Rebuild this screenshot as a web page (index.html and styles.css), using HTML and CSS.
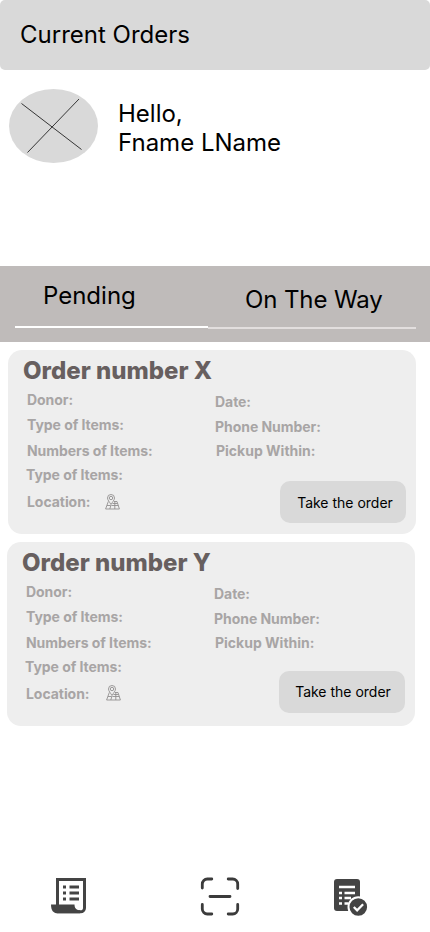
FILE: index.html
```html
<!DOCTYPE html>
<html lang="en">
<head>
<meta charset="utf-8">
<title>Current Orders</title>
<link rel="stylesheet" href="styles.css">
</head>
<body>
<svg class="defs" width="0" height="0">
  <symbol id="map-pin" viewBox="0 0 16 16">
    <g fill="none" stroke="currentColor" stroke-width="0.900">
      <path d="M6 10.500C4.500 8 2.500 6 2.500 4a3.500 3.500 0 0 1 7 0C9.500 6 7.500 8 6 10.500Z"/>
      <circle cx="6" cy="4" r="1.700"/>
      <path d="M3.300 7.500.6 15h13.800L12 7.500H9M2 11.500h3.500M6.500 11.500h6.800M4.800 15l1.200-4M9.800 15V7.500M7.500 9.500h5"/>
    </g>
  </symbol>
</svg>
<div class="app">
  <header class="topbar"><h1>Current Orders</h1></header>
  <section class="profile">
    <svg class="avatar" viewBox="0 0 89 74">
      <ellipse cx="44.500" cy="37" rx="44.500" ry="37" fill="#d9d9d9"/>
      <path d="M12.500 14.500 72.500 60.500M70 10 18.500 63.500" stroke="#222" stroke-width="0.900"/>
    </svg>
    <p class="greeting">Hello,<br>Fname LName</p>
  </section>
  <nav class="tabs">
    <a class="tab tab-active">Pending</a>
    <a class="tab tab-idle">On The Way</a>
  </nav>
  <main class="orders">
    <article class="order">
      <h2>Order number X</h2>
      <div class="details">
        <ul class="left">
          <li>Donor:</li><li>Type of Items:</li><li>Numbers of Items:</li><li>Type of Items:</li>
          <li>Location:<svg class="pin"><use href="#map-pin"/></svg></li>
        </ul>
        <div class="right">
          <ul><li>Date:</li><li>Phone Number:</li><li>Pickup Within:</li></ul>
          <button>Take the order</button>
        </div>
      </div>
    </article>
    <article class="order order-second">
      <h2>Order number Y</h2>
      <div class="details">
        <ul class="left">
          <li>Donor:</li><li>Type of Items:</li><li>Numbers of Items:</li><li>Type of Items:</li>
          <li>Location:<svg class="pin"><use href="#map-pin"/></svg></li>
        </ul>
        <div class="right">
          <ul><li>Date:</li><li>Phone Number:</li><li>Pickup Within:</li></ul>
          <button>Take the order</button>
        </div>
      </div>
    </article>
  </main>
  <footer class="bottombar">
    <svg class="receipt" viewBox="0 0 38 40" fill="none">
      <path d="M7.500 29V3.500h27V32a3.800 3.800 0 0 1-3.800 3.800H7" stroke="#444" stroke-width="3"/>
      <path d="M1 28.500h23.500c0 3 1.500 5.800 5.500 5.800v3H7.500C3.500 37.300 1 34.500 1 28.500Z" fill="#444"/>
      <path d="M13 11h3M13 17h3M13 23h3M19.500 11h9.500M19.500 17h9.500M19.500 23h9.500" stroke="#444" stroke-width="2.800"/>
    </svg>
    <svg class="scan" viewBox="0 0 40 40" fill="none" stroke="#3b3b3b" stroke-width="2.800" stroke-linecap="round">
      <path d="M2.300 12V8a5 5 0 0 1 5-5h4.500M28.200 3h4.500a5 5 0 0 1 5 5v4.500M37.700 28.500v4.500a5 5 0 0 1-5 5h-4.500M11.800 38H7.300a5 5 0 0 1-5-5V28.500M10 20.500h20"/>
    </svg>
    <svg class="checklist" viewBox="0 0 34 38">
      <rect width="26" height="32" rx="3" fill="#444"/>
      <path d="M5 8h16M5 14h3M5 19h3M5 24.500h3M10.500 14h10.500M10.500 19h6.500M10.500 24.500h4" stroke="#fff" stroke-width="2.300"/>
      <circle cx="24.300" cy="28" r="9.800" fill="#444" stroke="#fff" stroke-width="2"/>
      <path d="m19.800 28 3.300 3.300 6-6" fill="none" stroke="#fff" stroke-width="2.300"/>
    </svg>
  </footer>
</div>
</body>
</html>
```
FILE: styles.css
```css
* { box-sizing: border-box; margin: 0; padding: 0; }
body { background: #fff; color: #000; font-family: Inter, sans-serif; font-size: 24px; line-height: 29px; }
.defs { display: block; }
.app { width: 430px; height: 932px; display: flex; flex-direction: column; overflow: hidden; }
.topbar { height: 70px; padding: 20px; background: #d9d9d9; border-radius: 5px; }
h1 { font-size: 24px; font-weight: 400; }
.profile { display: flex; height: 196px; padding: 19px 9px 0; }
.avatar { width: 89px; height: 74px; }
.greeting { margin: 10px 0 0 20px; }
.tabs { display: flex; height: 76px; padding: 0 14px 0 15px; background: #bfbbba; }
.tab { border-bottom: 2px solid #fff; }
.tab-active { width: 193px; height: 62px; padding: 15px 0 0 28px; }
.tab-idle { flex: 1; height: 63px; padding: 19px 0 0 37px; border-color: #e2dede; letter-spacing: -0.1px; }
.orders { display: flex; flex-direction: column; gap: 8px; padding: 8px 0 0 8px; }
.order { width: 408px; height: 184px; padding: 6px 10px 0 15px; background: #eee; border-radius: 14px; }
.order-second { margin-left: -1px; }
h2 { font-size: 24px; line-height: 29px; font-weight: 800; color: #675f5f; }
ul { list-style: none; display: flex; flex-direction: column; }
.details { display: flex; margin-top: 6px; font-size: 14px; line-height: 17px; font-weight: 700; letter-spacing: -0.05px; color: #a8a5a5; }
.left { width: 192px; padding-left: 4px; }
.left li { display: flex; height: 25px; }
.left li:nth-child(3) { height: 24px; }
.left li:nth-child(2) { height: 26px; }
.left li:nth-child(4) { height: 27px; margin-left: -1px; }
.pin { width: 16px; height: 16px; margin: 1px 0 0 15px; color: #929090; }
.order-second .pin { margin: 0 0 0 17px; }
.right { flex: 1; display: flex; flex-direction: column; padding-top: 2px; }
.right li { height: 25px; }
.right li:nth-child(2) { height: 24px; }
.right li:nth-child(3) { height: 17px; padding-left: 1px; letter-spacing: 0; }
button { align-self: flex-end; width: 126px; height: 42px; margin-top: 22px; padding: 1px 0 0 4px; border: 0; border-radius: 10px; background: #d9d9d9; color: #000; font: 400 14px/17px Inter, sans-serif; }
.order-second button { margin-top: 20px; padding: 0 0 1px 2px; }
.bottombar { display: flex; margin-top: auto; height: 60px; padding: 4px 0 0 50px; }
.receipt { width: 38px; height: 40px; }
.scan { width: 40px; height: 40px; margin-left: 112px; }
.checklist { width: 34px; height: 38px; margin: 3px 0 0 94px; }
```
